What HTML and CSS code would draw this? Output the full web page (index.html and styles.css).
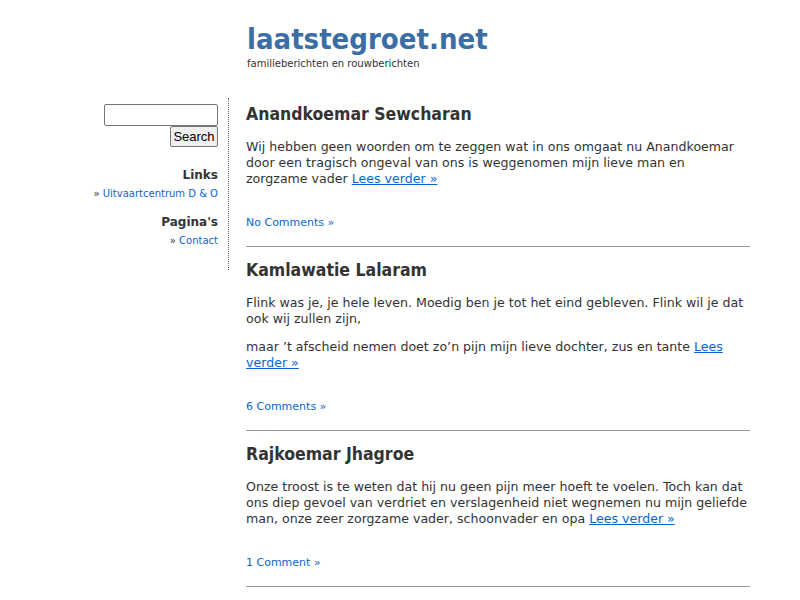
FILE: index.html
```html
<!DOCTYPE html>
<html>
<head>
<meta charset="utf-8">
<title>laatstegroet.net</title>
<link rel="stylesheet" href="styles.css">
</head>
<body>
<div class="header">
  <h1 class="site-title">laatstegroet.net</h1>
  <div class="tagline">familieberichten en rouwberichten</div>
</div>
<div class="wrap">
  <div class="sidebar">
    <form class="search">
      <input type="text" class="search-input">
      <button type="button" class="search-btn">Search</button>
    </form>
    <h3 class="side-title">Links</h3>
    <ul class="side-list"><li>» <a href="#">Uitvaartcentrum D &amp; O</a></li></ul>
    <h3 class="side-title">Pagina's</h3>
    <ul class="side-list"><li>» <a href="#">Contact</a></li></ul>
  </div>
  <div class="content">
    <div class="post">
      <h2 class="post-title">Anandkoemar Sewcharan</h2>
      <p>Wij hebben geen woorden om te zeggen wat in ons omgaat nu Anandkoemar door een tragisch ongeval van ons is weggenomen mijn lieve man en zorgzame vader <a href="#" class="more">Lees verder »</a></p>
      <div class="meta"><a href="#">No Comments »</a></div>
    </div>
    <div class="post">
      <h2 class="post-title">Kamlawatie Lalaram</h2>
      <p>Flink was je, je hele leven. Moedig ben je tot het eind gebleven. Flink wil je dat ook wij zullen zijn,</p>
      <p>maar ’t afscheid nemen doet zo’n pijn mijn lieve dochter, zus en tante <a href="#" class="more">Lees verder »</a></p>
      <div class="meta"><a href="#">6 Comments »</a></div>
    </div>
    <div class="post">
      <h2 class="post-title">Rajkoemar Jhagroe</h2>
      <p>Onze troost is te weten dat hij nu geen pijn meer hoeft te voelen. Toch kan dat ons diep gevoel van verdriet en verslagenheid niet wegnemen nu mijn geliefde man, onze zeer zorgzame vader, schoonvader en opa <a href="#" class="more">Lees verder »</a></p>
      <div class="meta"><a href="#">1 Comment »</a></div>
    </div>
  </div>
</div>
</body>
</html>
```

FILE: styles.css
```css
html, body {
  margin: 0;
  padding: 0;
  background: #fff;
}
body {
  font-family: "DejaVu Sans", Verdana, sans-serif;
  color: #333;
  font-size: 12.6px;
}
a {
  color: #0b66cc;
  text-decoration: none;
}
.header {
  padding: 20px 0 0 247px;
  height: 98px;
  box-sizing: border-box;
}
.site-title {
  margin: 0;
  font-family: "DejaVu Sans Condensed", "DejaVu Sans", sans-serif;
  font-size: 29px;
  line-height: 38px;
  font-weight: bold;
  color: #3a6ea5;
}
.tagline {
  font-size: 10px;
  line-height: 12px;
  color: #333;
}
.wrap {
  display: flex;
  align-items: flex-start;
  margin-left: 60px;
}
.sidebar {
  width: 158px;
  padding: 6px 10px 0 0;
  border-right: 1px dotted #666;
  text-align: right;
  min-height: 166px;
}
.search {
  display: flex;
  flex-direction: column;
  align-items: flex-end;
  margin: 0;
}
.search-input {
  width: 114px;
  height: 22px;
  box-sizing: border-box;
  border: 1px solid #767676;
  border-radius: 2px;
  margin: 0;
  padding: 1px 2px;
}
.search-btn {
  width: 48px;
  height: 21px;
  box-sizing: border-box;
  margin: 0;
  padding: 0;
  font-family: "Liberation Sans", Arial, sans-serif;
  font-size: 13px;
  color: #000;
  background: #efefef;
  border: 1px solid #767676;
  border-radius: 2px;
}
.side-title {
  margin: 20px 0 0;
  font-size: 12px;
  line-height: 16px;
  font-weight: bold;
  color: #333;
}
.side-list {
  list-style: none;
  margin: 3px 0 0;
  padding: 0;
  font-size: 10px;
  line-height: 16px;
}
.side-list + .side-title {
  margin-top: 12px;
}
.content {
  width: 504px;
  padding: 5px 0 0 17px;
}
.post {
  border-bottom: 1px solid #999;
  padding-bottom: 16px;
  margin-bottom: 12px;
}
.post-title {
  margin: 0 0 14px;
  font-family: "DejaVu Sans Condensed", "DejaVu Sans", sans-serif;
  font-size: 17.5px;
  line-height: 22px;
  font-weight: bold;
  color: #333;
}
.post p {
  margin: 0 0 12px;
  line-height: 16px;
}
.more {
  text-decoration: underline;
}
.meta {
  margin-top: 29px;
  font-size: 11px;
  line-height: 14px;
}
```
